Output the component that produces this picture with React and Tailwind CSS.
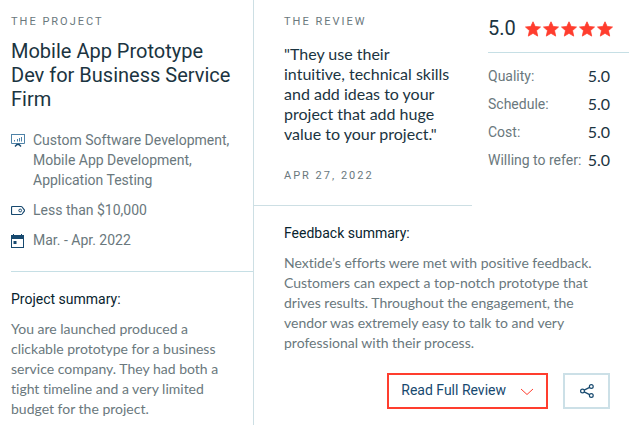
const services = "Custom Software Development, Mobile App Development, Application Testing";

const ratings = [
  ["Quality:", "5.0"],
  ["Schedule:", "5.0"],
  ["Cost:", "5.0"],
  ["Willing to refer:", "5.0"]
];

function BoardIcon() {
  return (
    <svg viewBox="0 0 14 14" className="mt-1 h-[14px] w-[14px] shrink-0" fill="none" stroke="#4f83a8" aria-hidden="true">
      <path d="M0 .5h14M.5 1v8.500h13V1" />
      <path d="M3.500 7.500V6M6.500 7.500V5M8.500 7.500V4M10.500 7.500V3" />
      <path d="M4 12.500 6 10.500h2l2 2" strokeWidth="1.400" stroke="#17496f" />
    </svg>
  );
}

function TagIcon() {
  return (
    <svg viewBox="0 0 14 14" className="mt-1 h-[14px] w-[14px] shrink-0" fill="none" stroke="#17496f" aria-hidden="true">
      <path d="M1.500 2.500h8.500q.7 0 1.100.5l2.200 2.900q.4.600 0 1.200L11.100 10q-.4.500-1.100.5H1.500q-1 0-1-1v-6q0-1 1-1z" strokeWidth="1.200" />
      <circle cx="9.200" cy="6.500" r="1.400" />
    </svg>
  );
}

function CalendarIcon() {
  return (
    <svg viewBox="0 0 14 14" className="mt-1 h-[14px] w-[14px] shrink-0" aria-hidden="true">
      <path d="M2 0h1v1h7V0h1v1h2v13H0V1h2zM1 5v8h11V5z" fill="#17496f" fillRule="evenodd" />
      <rect x="2.500" y="7" width="3" height="3" fill="#17496f" />
    </svg>
  );
}

function Star() {
  return (
    <svg viewBox="0 0 16 16" className="h-4 w-4" fill="#ff3d2e" stroke="#ff3d2e" strokeLinejoin="round" aria-hidden="true">
      <path d="M8 .8l2.200 4.700 5.300.5-4 3.600 1.200 5.500L8 12.300l-4.700 2.800 1.200-5.500L.5 6l5.300-.5z" strokeWidth=".8" />
    </svg>
  );
}

function Label({ children }) {
  return <div className="text-[11px] leading-3 tracking-[2px] text-[#6a787d] uppercase">{children}</div>;
}

function Summary({ title, children }) {
  return (
    <section>
      <h3 className="text-sm leading-5 text-[#08232e]">{title}</h3>
      <p className="mt-[10px] font-['Lato',sans-serif] text-sm leading-5 text-[#6a787d] [font-variant-ligatures:none]">{children}</p>
    </section>
  );
}

function Detail({ icon, children }) {
  return (
    <li className="flex gap-2">
      {icon}
      <span>{children}</span>
    </li>
  );
}

export default function App() {
  return (
    <article className="grid min-h-screen grid-cols-[254fr_375fr] bg-white font-['Roboto',sans-serif] text-[#1b3441]">
      <div className="border-r border-[#cddfe4] pt-4 pl-[11px]">
        <Label>The project</Label>
        <h2 className="mt-[11px] pr-5 text-xl leading-6">Mobile App Prototype Dev for Business Service Firm</h2>
        <ul className="mt-[19px] grid gap-[10px] border-b border-[#c6dfe5] pr-5 pb-[21px] text-sm leading-5 text-[#6a787d]">
          <Detail icon={<BoardIcon />}>{services}</Detail>
          <Detail icon={<TagIcon />}>Less than $10,000</Detail>
          <Detail icon={<CalendarIcon />}>Mar. - Apr. 2022</Detail>
        </ul>
        <div className="pt-[17px] pr-5">
          <Summary title="Project summary:">
            You are launched produced a clickable prototype for a business service company. They had both a tight timeline and a very limited budget for the project.
          </Summary>
        </div>
      </div>

      <div>
        <div className="grid grid-cols-[218fr_141fr] gap-x-4">
          <div className="border-b border-[#cddfe4] pt-4 pr-5 pb-[23px] pl-[30px]">
            <Label>The review</Label>
            <blockquote className="mt-4 font-['Lato',sans-serif] text-base leading-5 [font-variant-ligatures:none]">
              "They use their intuitive, technical skills and add ideas to your project that add huge value to your project."
            </blockquote>
            <div className="mt-[26px]">
              <Label>Apr 27, 2022</Label>
            </div>
          </div>
          <div>
            <div className="flex items-center gap-[9px] border-b border-[#c6dfe5] pt-4 pb-3">
              <span className="text-xl leading-6">5.0</span>
              <span className="mt-[2px] flex gap-[2px]" role="img" aria-label="5 out of 5 stars">
                <Star />
                <Star />
                <Star />
                <Star />
                <Star />
              </span>
            </div>
            <dl className="mt-[13px] grid gap-2 pr-[19px]">
              {ratings.map(([name, score]) => (
                <div key={name} className="flex justify-between whitespace-nowrap">
                  <dt className="text-sm leading-5 text-[#6a787d]">{name}</dt>
                  <dd className="font-['Lato',sans-serif] text-base leading-5">{score}</dd>
                </div>
              ))}
            </dl>
          </div>
        </div>

        <div className="pt-[17px] pr-[19px] pl-[30px]">
          <Summary title="Feedback summary:">
            Nextide’s efforts were met with positive feedback. Customers can expect a top-notch prototype that drives results. Throughout the engagement, the vendor was extremely easy to talk to and very professional with their process.
          </Summary>
          <div className="mt-5 flex justify-end gap-[15px]">
            <button className="flex h-9 items-center gap-[14px] border-2 border-[#ff3d2e] px-3 pb-[2px] text-sm text-[#17496f]">
              Read Full Review
              <svg viewBox="0 0 14 8" className="mt-1 h-2 w-[14px]" fill="none" stroke="#ff3d2e" aria-hidden="true">
                <path d="M1 1l6 5.500L13 1" />
              </svg>
            </button>
            <button className="grid h-9 w-[47px] place-items-center border-2 border-[#cce0e7]" aria-label="Share">
              <svg viewBox="0 0 14 14" className="h-[14px] w-[14px]" fill="none" stroke="#17496f" strokeWidth="1.200" aria-hidden="true">
                <circle cx="2.500" cy="7" r="1.900" />
                <circle cx="11.300" cy="2.500" r="1.900" />
                <circle cx="11.300" cy="11.500" r="1.900" />
                <path d="M4.200 6.100l5.400-2.700M4.200 7.900l5.400 2.700" />
              </svg>
            </button>
          </div>
        </div>
      </div>
    </article>
  );
}
